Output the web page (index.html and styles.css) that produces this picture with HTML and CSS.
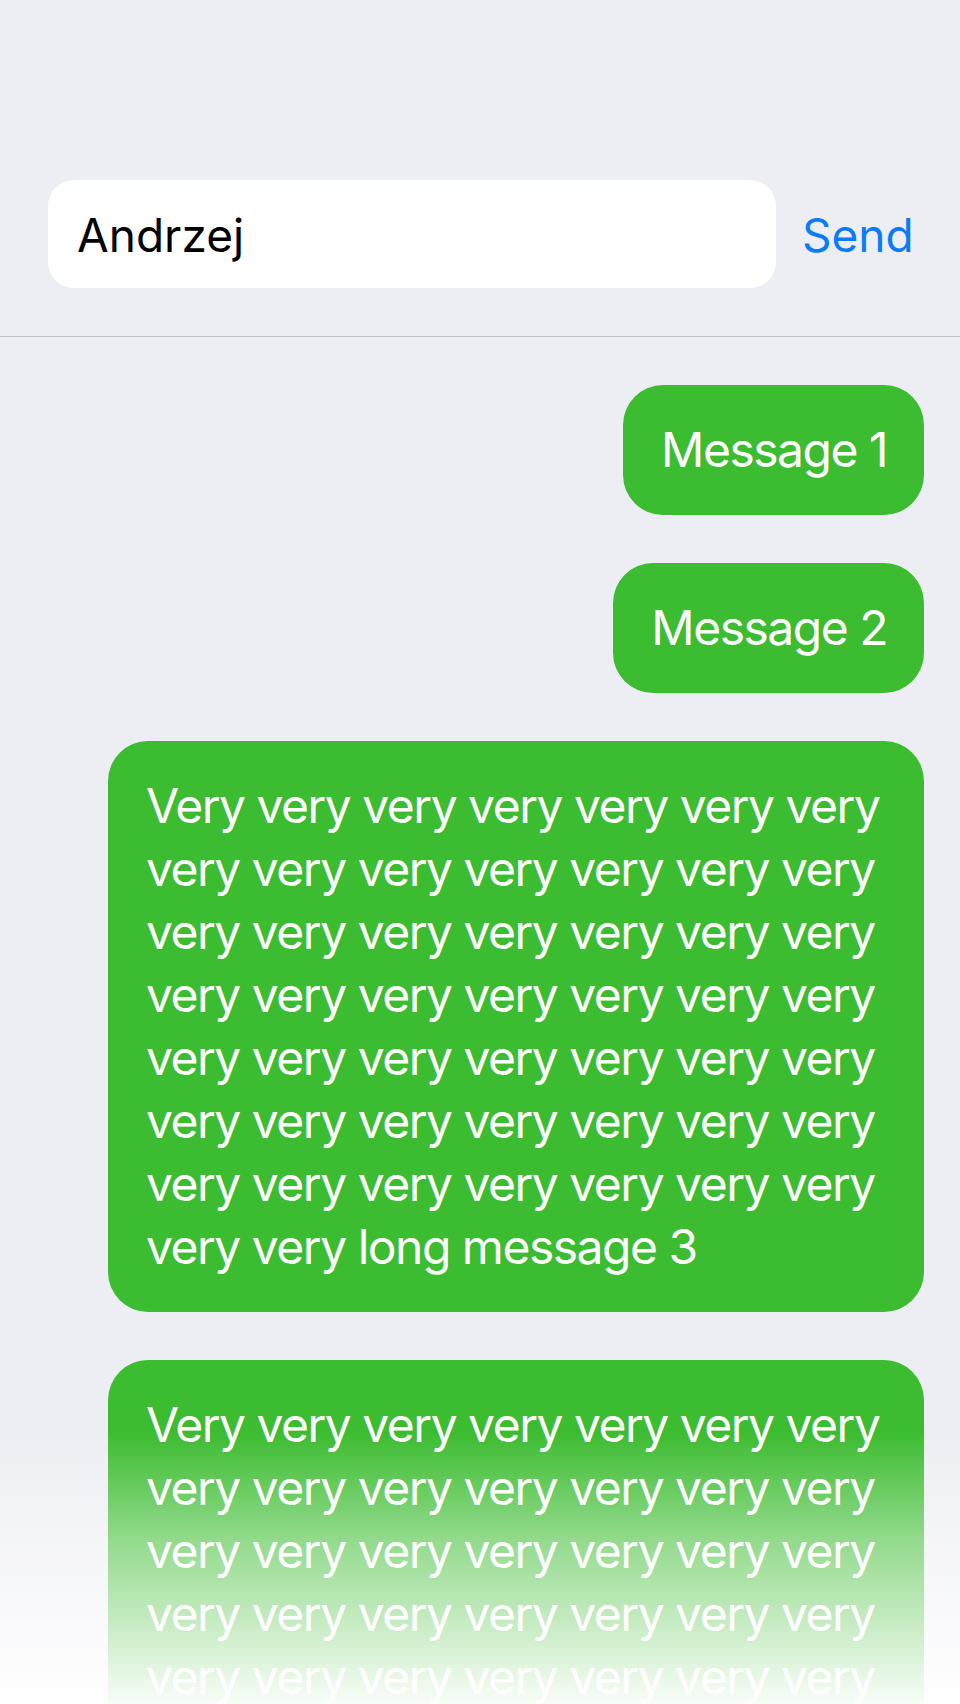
FILE: index.html
```html
<!DOCTYPE html>
<html lang="en">
<head>
<meta charset="utf-8">
<title>Chat</title>
<link rel="stylesheet" href="styles.css">
</head>
<body>
<div class="app">
  <header class="composer">
    <div class="input">Andrzej</div>
    <span class="send">Send</span>
  </header>
  <main class="messages">
    <div class="bubble">Message 1</div>
    <div class="bubble">Message 2</div>
    <div class="bubble">Very very very very very very very very very very very very very very very very very very very very very very very very very very very very very very very very very very very very very very very very very very very very very very very very very very very long message 3</div>
    <div class="bubble">Very very very very very very very very very very very very very very very very very very very very very very very very very very very very very very very very very very very very very very very very very very very very very very very very very very very long message 4</div>
  </main>
  <div class="fade"></div>
</div>
</body>
</html>
```
FILE: styles.css
```css
html, body {
  margin: 0;
  padding: 0;
}
body {
  background: #edeef3;
  font-family: Inter, "Noto Sans", sans-serif;
  -webkit-font-smoothing: antialiased;
}
.app {
  position: relative;
  height: 100vh;
  overflow: hidden;
}
.composer {
  display: flex;
  align-items: center;
  gap: 26px;
  padding: 180px 49px 48px 48px;
  border-bottom: 1px solid #c3c3c7;
}
.input {
  flex: 0 0 728px;
  height: 108px;
  box-sizing: border-box;
  padding: 0 29px;
  display: flex;
  align-items: center;
  background: #fff;
  border-radius: 26px;
  color: #000;
  font-size: 46px;
  padding-top: 2px;
}
.send {
  color: #0a7cf8;
  font-size: 46px;
  padding-top: 2px;
}
.messages {
  display: flex;
  flex-direction: column;
  align-items: flex-end;
  gap: 48px;
  padding: 48px 36px 0 36px;
}
.bubble {
  max-width: 816px;
  box-sizing: border-box;
  background: #3cbc30;
  color: #fff;
  font-size: 48px;
  letter-spacing: -1.5px;
  line-height: 63px;
  padding: 33px 37px 34px 38px;
  border-radius: 40px;
}
.fade {
  position: absolute;
  left: 0;
  right: 0;
  bottom: 0;
  height: 272px;
  background: linear-gradient(to bottom, rgba(255,255,255,0) 0%, rgba(255,255,255,0.45) 40%, rgba(255,255,255,0.97) 100%);
  pointer-events: none;
}
```
